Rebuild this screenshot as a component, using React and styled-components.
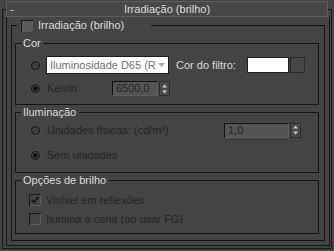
import React from 'react';
import styled, { createGlobalStyle } from 'styled-components';

const GlobalStyle = createGlobalStyle`
  html, body {
    margin: 0;
    padding: 0;
    background: #444444;
  }
  body {
    font-family: "Liberation Sans", Arial, sans-serif;
    font-size: 11px;
  }
`;

const Page = styled.div`
  box-sizing: border-box;
  width: 334px;
  height: 251px;
  padding-top: 9px;
  background: #444444;
  overflow: hidden;
`;

const Frame = styled.div`
  box-sizing: border-box;
  margin-left: 2px;
  width: 330px;
  height: 240px;
  border: 1px solid #181818;
`;

const Rollout = styled.div`
  margin: -9px 0 0 3px;
  width: 324px;
`;

const TitleBar = styled.div`
  box-sizing: border-box;
  width: 322px;
  height: 16px;
  border: 1px solid #5e5e5e;
  background: #484848;
  display: grid;
  grid-template-columns: 16px 1fr 16px;
  align-items: center;
  color: #dcdcdc;
  line-height: 14px;
`;

const Collapse = styled.span`
  padding-left: 3px;
  color: #dcdcdc;
`;

const Title = styled.span`
  text-align: center;
`;

const RollBody = styled.div`
  box-sizing: border-box;
  width: 324px;
  height: 229px;
  border: 1px solid #181818;
  border-top: none;
  padding: 2px 0 0 4px;
`;

const Group = styled.fieldset`
  box-sizing: border-box;
  margin: ${p => p.$top || 0}px 0 0 ${p => p.$left || 0}px;
  padding: 0;
  min-width: 0;
  width: ${p => p.$width}px;
  height: ${p => p.$height}px;
  border: 1px solid #161616;
`;

const Legend = styled.legend`
  margin-left: 5px;
  padding: 0 3px 0 2px;
  height: 13px;
  line-height: 13px;
  color: #dcdcdc;
`;

const CheckLegend = styled.legend`
  box-sizing: border-box;
  margin-left: 5px;
  padding: 0 0 0 4px;
  width: 134px;
  height: 13px;
  display: flex;
  align-items: flex-end;
  gap: 5px;
  color: #dcdcdc;
  line-height: 13px;
`;

const Row = styled.div`
  display: flex;
  align-items: ${p => p.$align || 'center'};
  height: ${p => p.$h}px;
  margin-top: ${p => p.$mt}px;
  padding-left: ${p => p.$pl || 14}px;
`;

const Label = styled.span`
  color: ${p => (p.$dim ? '#262626' : '#dcdcdc')};
  width: ${p => (p.$w ? `${p.$w}px` : 'auto')};
  margin-left: ${p => p.$ml || 0}px;
  white-space: nowrap;
  line-height: 13px;
`;

const Dropdown = styled.div`
  box-sizing: border-box;
  margin-left: 5px;
  width: 123px;
  height: 18px;
  background: #ffffff;
  border: 1px solid #1c1c1c;
  display: flex;
  align-items: center;
  justify-content: space-between;
  padding: 0 3px 0 3px;
  color: #707070;
  overflow: hidden;
`;

const DropText = styled.span`
  white-space: nowrap;
  overflow: hidden;
`;

const Swatch = styled.div`
  box-sizing: border-box;
  width: 42px;
  height: 16px;
  background: #ffffff;
  border: 1px solid #202020;
`;

const SwatchButton = styled.div`
  box-sizing: border-box;
  margin-left: 1px;
  width: 15px;
  height: 16px;
  background: #474747;
  border: 1px solid #2a2a2a;
`;

const Spinner = styled.div`
  display: flex;
  margin-left: ${p => p.$ml || 0}px;
`;

const SpinInput = styled.div`
  box-sizing: border-box;
  width: ${p => p.$w}px;
  height: 15px;
  background: #545454;
  border: 1px solid #5e5e5e;
  border-top-color: #121212;
  border-left-color: #121212;
  color: #262626;
  padding-left: 3px;
  line-height: 13px;
`;

const SpinButtons = styled.div`
  box-sizing: border-box;
  margin-left: 1px;
  width: 11px;
  height: 15px;
  background: #4a4a4a;
  border: 1px solid #2c2c2c;
  display: flex;
  flex-direction: column;
  align-items: center;
  justify-content: center;
  gap: 2px;
`;

const Radio = ({ checked }) => (
  <svg width="11" height="11" viewBox="0 0 11 11">
    <circle cx="5.5" cy="5.5" r="5" fill="#5a5a5a" />
    <circle cx="5.5" cy="5.5" r="4" fill="#3e3e3e" stroke="#1a1a1a" strokeWidth="1.2" />
    {checked && <circle cx="5.5" cy="5.5" r="2.2" fill="#0e0e0e" />}
  </svg>
);

const Check = ({ checked, fill = '#444444' }) => (
  <svg width="12" height="12" viewBox="0 0 12 12">
    <rect x="0.5" y="0.5" width="11" height="11" fill={fill} stroke="#1a1a1a" />
    <path d="M11.5 1 V11.5 H1" fill="none" stroke="#5c5c5c" />
    {checked && (
      <path d="M2.8 5.8 L5 8.2 L9.4 3.2" fill="none" stroke="#111111" strokeWidth="1.7" />
    )}
  </svg>
);

const Arrow = ({ dir = 'down', color = '#c8c8c8', w = 7 }) => (
  <svg width={w} height="4" viewBox="0 0 7 4">
    {dir === 'down'
      ? <path d="M0 0 H7 L3.5 4 Z" fill={color} />
      : <path d="M0 4 H7 L3.5 0 Z" fill={color} />}
  </svg>
);

const SpinBox = ({ value, width, ml }) => (
  <Spinner $ml={ml}>
    <SpinInput $w={width}>{value}</SpinInput>
    <SpinButtons>
      <Arrow dir="up" w={5} />
      <Arrow dir="down" w={5} />
    </SpinButtons>
  </Spinner>
);

const App = () => (
  <Page>
    <GlobalStyle />
    <Frame>
      <Rollout>
        <TitleBar>
          <Collapse>-</Collapse>
          <Title>Irradiação (brilho)</Title>
          <span />
        </TitleBar>
        <RollBody>
          <Group $width={314} $height={222}>
            <CheckLegend>
              <Check fill="#5a5a5a" />
              <span>Irradiação (brilho)</span>
            </CheckLegend>

            <Group $top={5} $left={3} $width={304} $height={68}>
              <Legend>Cor</Legend>
              <Row $h={18} $mt={6}>
                <Radio />
                <Dropdown>
                  <DropText>Iluminosidade D65 (R</DropText>
                  <Arrow color="#a8a8a8" />
                </Dropdown>
                <Label $ml={7} $w={71}>Cor do filtro:</Label>
                <Swatch />
                <SwatchButton />
              </Row>
              <Row $h={15} $mt={7}>
                <Radio checked />
                <Label $dim $ml={6} $w={65}>Kelvin:</Label>
                <SpinBox value="6500,0" width={46} />
              </Row>
            </Group>

            <Group $top={1} $left={3} $width={304} $height={67}>
              <Legend>Iluminação</Legend>
              <Row $h={16} $mt={3}>
                <Radio />
                <Label $dim $ml={6} $w={177}>Unidades físicas: (cd/m²)</Label>
                <SpinBox value="1,0" width={65} />
              </Row>
              <Row $h={13} $mt={11}>
                <Radio checked />
                <Label $dim $ml={6}>Sem unidades</Label>
              </Row>
            </Group>

            <Group $top={1} $left={3} $width={304} $height={60}>
              <Legend>Opções de brilho</Legend>
              <Row $h={12} $mt={7} $pl={13}>
                <Check checked />
                <Label $dim $ml={5}>Visível em reflexões</Label>
              </Row>
              <Row $h={12} $mt={7} $pl={13}>
                <Check />
                <Label $dim $ml={5}>Ilumina a cena (ao usar FG)</Label>
              </Row>
            </Group>
          </Group>
        </RollBody>
      </Rollout>
    </Frame>
  </Page>
);

export default App;
